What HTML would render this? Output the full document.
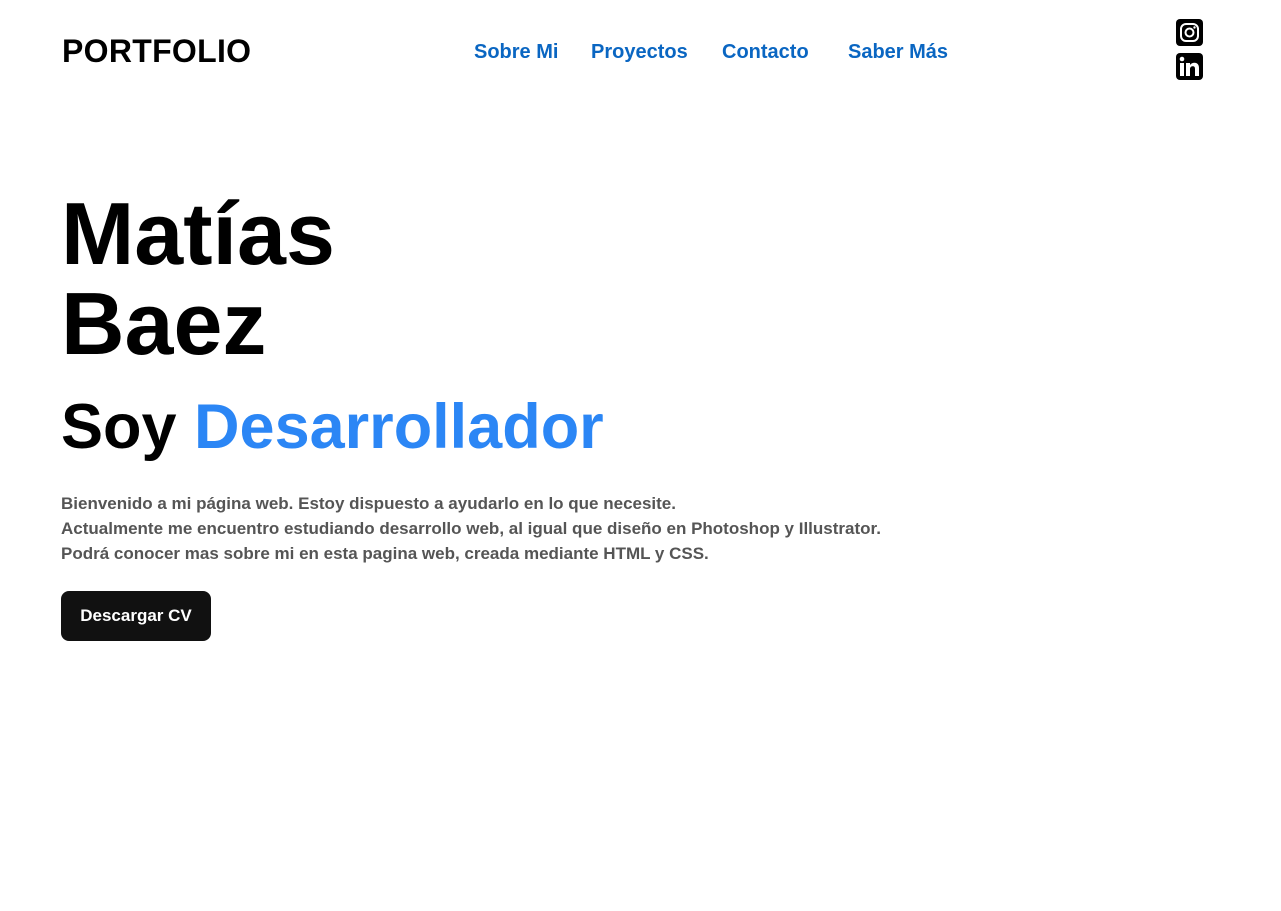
<!DOCTYPE html>
<html><head><meta charset="utf-8"><style>
*{margin:0;padding:0;box-sizing:border-box}
body{width:1281px;height:911px;background:#fff;font-family:"Liberation Sans",sans-serif;position:relative;overflow:hidden}
.logo{position:absolute;left:62px;top:33px;font-size:32px;font-weight:bold;color:#000;letter-spacing:0.3px}
.nav a{position:absolute;top:41px;font-size:20px;font-weight:bold;color:#0a66c2;text-decoration:none;white-space:nowrap}
.ic{position:absolute;left:1176px;width:27px;height:27px;background:#000;border-radius:4px}
h1{position:absolute;left:61px;top:189px;font-size:88px;line-height:90px;font-weight:bold;color:#000}
h2{position:absolute;left:61px;top:391px;font-size:63px;font-weight:bold;color:#000;white-space:nowrap}
h2 span{color:#2b86f5}
p{position:absolute;left:61px;top:491px;font-size:17px;line-height:25px;font-weight:bold;color:#555;white-space:nowrap}
.btn{position:absolute;left:61px;top:591px;width:150px;height:50px;background:#111;border-radius:8px;color:#fff;font-size:17px;font-weight:bold;text-align:center;line-height:50px}
</style></head><body>
<div class="logo">PORTFOLIO</div>
<div class="nav">
<a style="left:474px">Sobre Mi</a>
<a style="left:591px">Proyectos</a>
<a style="left:722px">Contacto</a>
<a style="left:848px">Saber Más</a>
</div>
<div class="ic" style="top:19px"><svg width="27" height="27" viewBox="0 0 27 27"><rect x="5" y="5" width="17" height="17" rx="5" fill="none" stroke="#fff" stroke-width="2"/><circle cx="13.5" cy="13.5" r="4" fill="none" stroke="#fff" stroke-width="2"/><circle cx="18.5" cy="8.5" r="1.2" fill="#fff"/></svg></div>
<div class="ic" style="top:53px"><svg width="27" height="27" viewBox="0 0 27 27"><rect x="4" y="10" width="4" height="13" fill="#fff"/><circle cx="6" cy="6" r="2.3" fill="#fff"/><path d="M10 10h4v2c1-1.5 2.5-2.3 4.5-2.3 3 0 4.5 2 4.5 5.5V23h-4v-7c0-2-.7-2.8-2.2-2.8S14 14.2 14 16v7h-4z" fill="#fff"/></svg></div>
<h1>Matías<br>Baez</h1>
<h2>Soy <span>Desarrollador</span></h2>
<p>Bienvenido a mi página web. Estoy dispuesto a ayudarlo en lo que necesite.<br>Actualmente me encuentro estudiando desarrollo web, al igual que diseño en Photoshop y Illustrator.<br>Podrá conocer mas sobre mi en esta pagina web, creada mediante HTML y CSS.</p>
<div class="btn">Descargar CV</div>
</body></html>
